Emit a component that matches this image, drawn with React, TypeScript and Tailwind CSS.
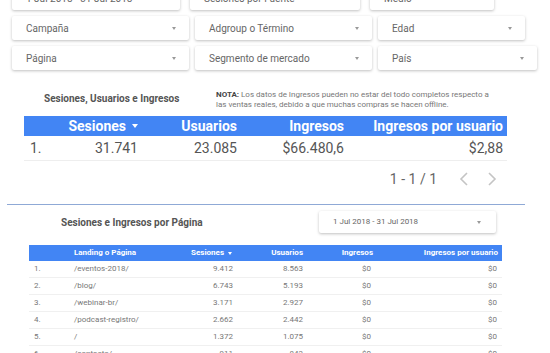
import React from 'react';

type Filter = { label: string; w: string };

const filterRows: { gap: string; items: Filter[] }[] = [
  {
    gap: 'gap-[10px]',
    items: [
      { label: '1 Jul 2018 - 31 Jul 2018', w: 'w-[168px]' },
      { label: 'Sesiones por Fuente', w: 'w-[170px]' },
      { label: 'Medio', w: 'w-[124px]' },
    ],
  },
  {
    gap: 'gap-[6px]',
    items: [
      { label: 'Campaña', w: 'w-[177px]' },
      { label: 'Adgroup o Término', w: 'w-[177px]' },
      { label: 'Edad', w: 'w-[147px]' },
    ],
  },
  {
    gap: 'gap-[6px]',
    items: [
      { label: 'Página', w: 'w-[177px]' },
      { label: 'Segmento de mercado', w: 'w-[177px]' },
      { label: 'País', w: 'w-[159px]' },
    ],
  },
];

const pages = [
  ['1.', '/eventos-2018/', '9.412', '8.563'],
  ['2.', '/blog/', '6.743', '5.193'],
  ['3.', '/webinar-br/', '3.171', '2.927'],
  ['4.', '/podcast-registro/', '2.662', '2.442'],
  ['5.', '/', '1.372', '1.075'],
  ['6.', '/contacto/', '911', '843'],
];

// Small dropdown caret
function Caret() {
  return <span className="inline-block w-0 h-0 border-l-[2px] border-r-[2px] border-t-[3px] border-l-transparent border-r-transparent border-t-[#999]" />;
}

function FilterBox({ label, w }: Filter) {
  return (
    <div className={`${w} h-[24px] flex items-center justify-between pl-[14px] pr-[13px] bg-white rounded-[2px] shadow-[0_1px_3px_rgba(0,0,0,0.25)]`}>
      <span className="text-[10px] text-[#666]">{label}</span>
      <Caret />
    </div>
  );
}

export default function App() {
  return (
    <div className="w-[550px] h-[353px] overflow-hidden bg-white font-['Roboto',sans-serif]">
      {/* Filters (scrolled, first row clipped) */}
      <div className="flex flex-col gap-[6px] pl-[12px] -mt-[14px]">
        {filterRows.map((row, i) => (
          <div key={i} className={`flex ${row.gap}`}>
            {row.items.map((f) => (
              <FilterBox key={f.label} {...f} />
            ))}
          </div>
        ))}
      </div>

      {/* Summary section */}
      <div className="flex items-start mt-[20px] pl-[44px]">
        <div className="w-[172px] pt-[3px]">
          <p className="text-[10px] font-bold text-[#555] leading-[12px] whitespace-nowrap">
            Sesiones, Usuarios e Ingresos
          </p>
        </div>
        <p className="w-[284px] text-[8px] leading-[10px] text-[#777]">
          <span className="font-bold text-[#444]">NOTA:</span> Los datos de Ingresos pueden no estar del todo completos respecto a las ventas reales, debido a que muchas compras se hacen offline.
        </p>
      </div>

      <div className="ml-[24px] w-[483px] mt-[6px]">
        <div className="grid grid-cols-[36px_81px_99px_107px_1fr] h-[20px] items-center bg-[#4285f4] text-white text-[14px] font-bold leading-none">
          <span />
          <span className="text-right pr-[3px] flex items-center justify-end gap-[6px]">
            Sesiones
            <span className="inline-block w-0 h-0 border-l-[3px] border-r-[3px] border-t-[4px] border-l-transparent border-r-transparent border-t-white" />
          </span>
          <span className="text-right pr-[3px]">Usuarios</span>
          <span className="text-right pr-[3px]">Ingresos</span>
          <span className="text-right pr-[4px]">Ingresos por usuario</span>
        </div>
        <div className="grid grid-cols-[36px_81px_99px_107px_1fr] h-[25px] items-center text-[14px] text-[#555] border-b border-[#eee]">
          <span className="pl-[6px]">1.</span>
          <span className="text-right pr-[3px]">31.741</span>
          <span className="text-right pr-[3px]">23.085</span>
          <span className="text-right pr-[3px]">$66.480,6</span>
          <span className="text-right pr-[4px]">$2,88</span>
        </div>
        <div className="flex items-center justify-end h-[36px] gap-[18px] pr-[10px] text-[#666]">
          <span className="text-[14px] mr-[4px]">1 - 1 / 1</span>
          <svg width="10" height="16" viewBox="0 0 10 16" fill="none" stroke="#c4c4c4" strokeWidth="1.6">
            <path d="M8 2 L2 8 L8 14" />
          </svg>
          <svg width="10" height="16" viewBox="0 0 10 16" fill="none" stroke="#c4c4c4" strokeWidth="1.6">
            <path d="M2 2 L8 8 L2 14" />
          </svg>
        </div>
      </div>

      {/* Divider */}
      <div className="ml-[7px] w-[518px] h-px bg-[#8fa9d6] mt-[7px]" />

      {/* Pages section */}
      <div className="flex items-center mt-[6px] h-[22px]">
        <p className="pl-[61px] w-[319px] text-[10px] font-bold text-[#555]">Sesiones e Ingresos por Página</p>
        <div className="w-[177px] h-[22px] flex items-center justify-between pl-[14px] pr-[15px] bg-white rounded-[2px] shadow-[0_1px_3px_rgba(0,0,0,0.25)]">
          <span className="text-[8px] text-[#666]">1 Jul 2018 - 31 Jul 2018</span>
          <Caret />
        </div>
      </div>

      <div className="ml-[29px] w-[473px] mt-[12px]">
        <div className="grid grid-cols-[45px_110px_52px_71px_70px_1fr] h-[16px] items-center bg-[#4285f4] text-white text-[8px] font-bold">
          <span />
          <span>Landing o Página</span>
          <span className="flex items-center justify-end gap-[4px] pr-[4px]">
            Sesiones
            <span className="inline-block w-0 h-0 border-l-[2px] border-r-[2px] border-t-[3px] border-l-transparent border-r-transparent border-t-white" />
          </span>
          <span className="text-right pr-[4px]">Usuarios</span>
          <span className="text-right pr-[4px]">Ingresos</span>
          <span className="text-right pr-[4px]">Ingresos por usuario</span>
        </div>
        {pages.map(([n, path, ses, usr]) => (
          <div key={n} className="grid grid-cols-[45px_110px_52px_71px_70px_1fr] h-[17px] items-center text-[8px] text-[#777] border-b border-[#f0f0f0]">
            <span className="pl-[5px]">{n}</span>
            <span>{path}</span>
            <span className="text-right pr-[3px]">{ses}</span>
            <span className="text-right pr-[4px]">{usr}</span>
            <span className="text-right pr-[6px]">$0</span>
            <span className="text-right pr-[5px]">$0</span>
          </div>
        ))}
      </div>
    </div>
  );
}
